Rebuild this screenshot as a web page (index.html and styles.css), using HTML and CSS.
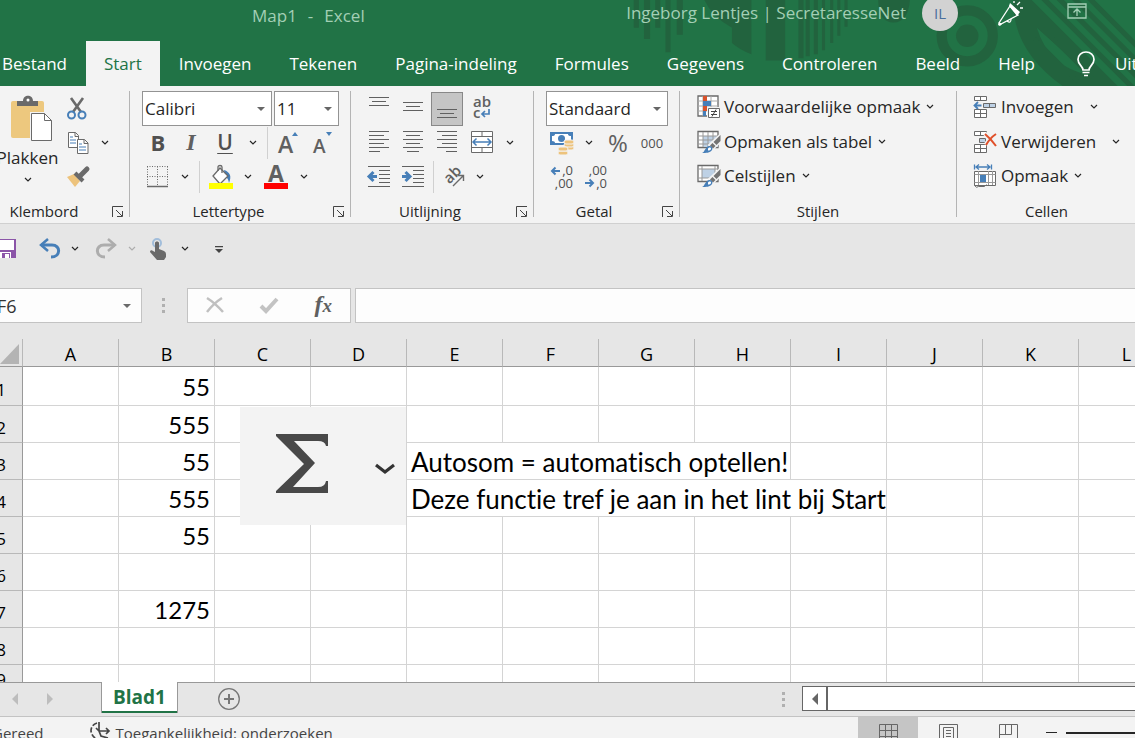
FILE: index.html
```html
<!DOCTYPE html>
<html lang="nl">
<head>
<meta charset="utf-8">
<title>Map1 - Excel</title>
<link rel="stylesheet" href="styles.css">
</head>
<body>
<svg class="defs" aria-hidden="true">
  <symbol id="chev" viewBox="0 0 8 6"><path d="M1 1l3 3 3-3" fill="none" stroke="currentColor" stroke-width="1.2"/></symbol>
  <symbol id="launch" viewBox="0 0 12 12"><path d="M.5 11V.5H11M4 4l6 6M10.500 5v5.500H5" fill="none" stroke="#444"/></symbol>
  <symbol id="brush" viewBox="0 0 24 24"><path d="M24 4v7l-8 8-4-4z" fill="#f3f3f3" stroke="#f3f3f3" stroke-width="2"/><path d="M23.500 5v6l-4 4-3-3z" fill="#737373"/><path d="M15.500 13l3 3-2.500 2.500-3-3z" fill="#737373"/><path d="M5 23c3-1 3-6 7-7 3 0 4 2 3 4-2 3-6 3-10 3z" fill="#477fb8"/><path d="M11 19c0-2 3-2 3-.5 0 2-2 2-3 2" fill="#fff"/></symbol>
</svg>

<header class="top">
  <svg class="art" viewBox="0 0 523 84" aria-hidden="true">
    <g fill="#22633e">
      <path d="M33 0h5v27h-5zM43 0h6v38h-6zM54 0h5v27h-5zM64 0h5v51h-5zM75 0h6v34h-6z"/>
      <path d="M102 0h46v53q-11-4-19-11V27Q110 17 102 0zM162 0h19v59h-19zM194 0h5v57h-5zM201 0h4v55h-4zM209 0h4v53h-4zM217 0h3v49h-3zM225 0h3v42h-3zM232 0h3v35h-3zM239 0h3v26h-3z"/>
      <path d="M272 0h31q-2 22-16 22-15 0-15-22z"/>
      <circle cx="359" cy="35" r="11"/>
      <path d="M404 0h18l86 86h-53Q403 50 404 0z"/>
    </g>
    <circle cx="359" cy="35" r="25" fill="none" stroke="#22633e" stroke-width="10"/>
    <g stroke="#22633e" stroke-width="5"><path d="M430-5l91 91M445-5l91 91M460-5l91 91M475-5l91 91"/></g>
    <path d="M427 27l51 46q-39-7-51-46z" fill="#217346"/>
    <g stroke="#22633e" stroke-width="4"><path d="M425 38l42 42M433 28l48 48"/></g>
  </svg>
  <div class="titlebar">
    <div class="doc"><span>Map1</span><span>-</span><span>Excel</span></div>
    <div class="account">
      <span>Ingeborg Lentjes | SecretaresseNet</span>
      <button class="avatar">IL</button>
      <button class="plain pen" aria-label="Nieuw"><svg width="26" height="26" viewBox="0 0 26 26"><path d="M12 5l8 9-17 9-2-1z" fill="none" stroke="#fff" stroke-width="1.300"/><path d="M12 2l10 9-3 4-8-10zM1 21l3 2-2 2-2-1z" fill="#fff"/><path d="M9 20q4 3 4-2M16 2V0M19 4l3-3M22 7h3" fill="none" stroke="#fff" stroke-width="1.300"/></svg></button>
      <button class="plain" aria-label="Lintopties"><svg width="20" height="16" viewBox="0 0 20 16" fill="none" stroke="#a3cfb5" stroke-width="1.300"><path d="M1 1h18v14H1zM1 4h18M10 13V6M6.500 9.500L10 6l3.500 3.500"/></svg></button>
    </div>
  </div>
  <nav class="tabs">
    <a href="#">Bestand</a><a href="#" class="on">Start</a><a href="#">Invoegen</a><a href="#">Tekenen</a><a href="#">Pagina-indeling</a><a href="#">Formules</a><a href="#">Gegevens</a><a href="#">Controleren</a><a href="#">Beeld</a><a href="#">Help</a>
    <a href="#" class="tell"><svg width="18" height="26" viewBox="0 0 18 26" fill="none" stroke="#fff" stroke-width="1.700"><path d="M6 19c0-4-5-5-5-10.500C1 4 4.500 1 9 1s8 3 8 7.500C17 14 12 15 12 19zM5.500 21.500h7M7 24.500h4"/></svg>Uit</a>
  </nav>
</header>

<main class="ribbon">
  <section class="group g-klem">
    <div class="clip">
      <button class="paste">
        <svg width="42" height="46" viewBox="0 0 42 46"><rect x="0" y="5" width="33" height="37" rx="2" fill="#edc87e"/><path d="M6 10V5h6c0-7 10-7 10 0h5v5z" fill="#6a6a6a"/><circle cx="17" cy="4" r="1.500" fill="#fff"/><path d="M19 16h15l8 8v22H19z" fill="#f3f3f3"/><path d="M20.500 17.500h13l7 7v20h-20z" fill="#fff" stroke="#6a6a6a"/><path d="M33.500 17.500v7h7" fill="none" stroke="#6a6a6a"/></svg>
        <span>Plakken</span>
        <svg class="chev"><use href="#chev"/></svg>
      </button>
      <div class="clipcol">
        <div class="row"><button class="w32" aria-label="Knippen"><svg width="20" height="22" viewBox="0 0 20 22"><path d="M4 0l10 14M16 0L6 14" stroke="#6a6a6a" stroke-width="2.600"/><circle cx="4.500" cy="17" r="3.500" fill="none" stroke="#477fb8" stroke-width="2"/><circle cx="15" cy="17" r="3.500" fill="none" stroke="#477fb8" stroke-width="2"/></svg></button></div>
        <div class="row"><button class="w34" aria-label="Kopiëren"><svg width="22" height="24" viewBox="0 0 22 24"><g fill="#fff" stroke="#6a6a6a"><path d="M1.500 1.500h7l3 3v12h-10zM8 1.500v4h3.500"/><path d="M10.500 8.500h7l3.500 3.500v10.500H10.500zM17 8.500V12.500h4"/></g><path d="M3 6h3M3 9h6M3 12h6M12 13h3M12 16h7M12 19h7" stroke="#477fb8"/></svg></button><button class="w20" aria-label="Kopieeropties"><svg class="chev"><use href="#chev"/></svg></button></div>
        <div class="row"><button class="w34" aria-label="Opmaak kopiëren"><svg width="24" height="22" viewBox="0 0 24 22"><path d="M1 11l7-3 6 7-5 6z" fill="#edc37c"/><path d="M9 7l8 8" stroke="#6a6a6a" stroke-width="4"/><path d="M14 10l7-7" stroke="#6a6a6a" stroke-width="5" stroke-linecap="round"/></svg></button></div>
      </div>
    </div>
    <footer><span>Klembord</span><button class="launch" aria-label="Klembord openen"><svg><use href="#launch"/></svg></button></footer>
  </section>

  <section class="group g-font">
    <div class="row two"><select class="fontname" aria-label="Lettertype"><option>Calibri</option></select><select class="fontsize" aria-label="Tekengrootte"><option>11</option></select></div>
    <div class="row">
      <button class="w32 bold">B</button><button class="w34 ital">I</button><button class="w34 under">U</button><button class="w22" aria-label="Onderstrepingen"><svg class="chev"><use href="#chev"/></svg></button><i class="sep"></i>
      <button class="w32" aria-label="Groter"><svg width="22" height="24" viewBox="0 0 22 24"><text x="1" y="22" class="bigA">A</text><path d="M15 5l3-4 3 4z" fill="#477fb8"/></svg></button>
      <button class="w36" aria-label="Kleiner"><svg width="22" height="24" viewBox="0 0 22 24"><text x="2" y="22" class="smallA">A</text><path d="M15 1h6l-3 4z" fill="#477fb8"/></svg></button>
    </div>
    <div class="row">
      <button class="w32" aria-label="Randen"><svg width="22" height="22" viewBox="0 0 22 22" stroke="#6a6a6a"><path d="M.5.500v20M10.500.500v20M20.500.500v20M0 .5h21M0 10.500h21" stroke-dasharray="1 1.500"/><path d="M0 20.500h21" stroke-width="1.500"/></svg></button><button class="w22" aria-label="Randopties"><svg class="chev"><use href="#chev"/></svg></button><i class="sep"></i>
      <button class="w34" aria-label="Opvulkleur"><svg width="24" height="24" viewBox="0 0 24 24"><path d="M15 5c6 2 8 6 5 13-1-5-2-5-4-7z" fill="#477fb8"/><path d="M11 3l8 8-8 8-7-8z" fill="#fff" stroke="#6a6a6a" stroke-width="1.300"/><path d="M9 6V2c0-2 4-2 4 0v6" fill="none" stroke="#6a6a6a" stroke-width="1.300"/><path d="M0 18h24v6H0z" fill="#ff0"/></svg></button><button class="w20" aria-label="Opvulopties"><svg class="chev"><use href="#chev"/></svg></button>
      <button class="w36" aria-label="Tekstkleur"><svg width="24" height="24" viewBox="0 0 24 24"><text x="4" y="17" class="colA">A</text><path d="M0 18h24v6H0z" fill="red"/></svg></button><button class="w20" aria-label="Tekstkleuropties"><svg class="chev"><use href="#chev"/></svg></button>
    </div>
    <footer><span>Lettertype</span><button class="launch" aria-label="Lettertype openen"><svg><use href="#launch"/></svg></button></footer>
  </section>

  <section class="group g-align">
    <div class="row">
      <button class="w34" aria-label="Boven"><svg class="al" viewBox="0 0 22 24"><path d="M1 .5h20M4 4.500h14M1 8.500h20"/></svg></button><button class="w34" aria-label="Midden"><svg class="al" viewBox="0 0 22 24"><path d="M1 5.500h20M4 9.500h14M1 13.500h20"/></svg></button><button class="w34 pressed" aria-label="Onder"><svg class="al" viewBox="0 0 22 24"><path d="M1 12.500h20M4 16.500h14M1 20.500h20"/></svg></button>
      <button class="w36" aria-label="Terugloop"><svg width="22" height="24" viewBox="0 0 22 24"><text x="2" y="10" class="ab">ab</text><text x="2" y="21" class="ab">c</text><path d="M18 12v5h-6M14 14l-3 3 3 3" fill="none" stroke="#477fb8" stroke-width="1.700"/></svg></button>
    </div>
    <div class="row">
      <button class="w34" aria-label="Links"><svg class="al" viewBox="0 0 22 24"><path d="M1 .5h20M1 4.500h15M1 8.500h20M1 12.500h15M1 16.500h20M1 20.500h11"/></svg></button><button class="w34" aria-label="Centreren"><svg class="al" viewBox="0 0 22 24"><path d="M1 .5h20M4 4.500h14M1 8.500h20M4 12.500h14M1 16.500h20M5 20.500h12"/></svg></button><button class="w34" aria-label="Rechts"><svg class="al" viewBox="0 0 22 24"><path d="M1 .5h20M6 4.500h15M1 8.500h20M6 12.500h15M1 16.500h20M10 20.500h11"/></svg></button>
      <button class="w36" aria-label="Samenvoegen"><svg width="24" height="24" viewBox="0 0 24 24" fill="none" stroke="#6a6a6a"><path d="M1.500.500h21v21h-21z" fill="#fff"/><path d="M1.500 5.500h21M1.500 16.500h21M12 0v5M12 17v5"/><path d="M3 11h18M6.500 7.500L3 11l3.500 3.500M17.500 7.500L21 11l-3.500 3.500" stroke="#477fb8" stroke-width="1.500"/></svg></button><button class="w20" aria-label="Samenvoegopties"><svg class="chev"><use href="#chev"/></svg></button>
    </div>
    <div class="row">
      <button class="w34" aria-label="Minder inspringen"><svg class="al" viewBox="0 0 22 24"><path d="M0 1.500h22M11 5.500h11M11 9.500h11M11 13.500h11M11 17.500h11M0 21.500h22"/><path d="M1 11.500h8M5.500 7L1 11.500 5.500 16" class="bl"/></svg></button><button class="w34" aria-label="Meer inspringen"><svg class="al" viewBox="0 0 22 24"><path d="M0 1.500h22M11 5.500h11M11 9.500h11M11 13.500h11M11 17.500h11M0 21.500h22"/><path d="M0 11.500h8M3.500 7L8 11.500 3.500 16" class="bl"/></svg></button><i class="sep"></i>
      <button class="w32" aria-label="Afdrukstand"><svg width="22" height="22" viewBox="0 0 22 22"><text x="1" y="15" transform="rotate(-45 8 10)" class="ab">ab</text><path d="M10 20L20 10M15 9.500h5.500V15" fill="none" stroke="#6a6a6a" stroke-width="1.400"/></svg></button><button class="w20" aria-label="Standopties"><svg class="chev"><use href="#chev"/></svg></button>
    </div>
    <footer><span>Uitlijning</span><button class="launch" aria-label="Uitlijning openen"><svg><use href="#launch"/></svg></button></footer>
  </section>

  <section class="group g-num">
    <div class="row"><select class="numfmt" aria-label="Getalnotatie"><option>Standaard</option></select></div>
    <div class="row">
      <button class="w32" aria-label="Valuta"><svg width="24" height="24" viewBox="0 0 24 24"><path d="M0 1h23v13H0z" fill="#477fb8"/><path d="M2 5q3 0 3-2h13q0 2 3 2v5q-3 0-3 2H5q0-2-3-2z" fill="#fff"/><circle cx="11.500" cy="7.500" r="3.500" fill="#477fb8"/><g fill="#edc37c" stroke="#f3f3f3"><rect x="14" y="15" width="10" height="4" rx="2"/><rect x="14" y="12" width="10" height="4" rx="2"/><rect x="14" y="9" width="10" height="4" rx="2"/><rect x="8" y="20" width="10" height="4" rx="2"/><rect x="8" y="16" width="10" height="4" rx="2"/></g></svg></button><button class="w22" aria-label="Valutaopties"><svg class="chev"><use href="#chev"/></svg></button><button class="w36 pct">%</button><button class="w32 zeros">000</button>
    </div>
    <div class="row">
      <button class="w32" aria-label="Meer decimalen"><svg width="24" height="24" viewBox="0 0 24 24"><text x="23" y="10" text-anchor="end" class="dec">,0</text><text x="23" y="23" text-anchor="end" class="dec">,00</text><path d="M2 6h8M5.500 2.500L2 6l3.500 3.500" fill="none" stroke="#477fb8" stroke-width="2"/></svg></button>
      <button class="w36" aria-label="Minder decimalen"><svg width="24" height="24" viewBox="0 0 24 24"><text x="23" y="10" text-anchor="end" class="dec">,00</text><text x="23" y="23" text-anchor="end" class="dec">,0</text><path d="M1 18h8M5.500 14.500L9 18l-3.500 3.500" fill="none" stroke="#477fb8" stroke-width="2"/></svg></button>
    </div>
    <footer><span>Getal</span><button class="launch" aria-label="Getal openen"><svg><use href="#launch"/></svg></button></footer>
  </section>

  <section class="group g-style">
    <div class="row"><button class="cmd"><svg width="24" height="24" viewBox="0 0 24 24"><path d="M1 1h20v20H1z" fill="#fff" stroke="#6a6a6a" stroke-width="1.300"/><path d="M1 6h20M1 11h20M1 16h20M6 1v20M14 1v20" stroke="#aaa"/><path d="M6 1h4v5H6zM6 11h4v5H6z" fill="#d9532c"/><path d="M6 6h8v5H6zM6 16h3v5H6z" fill="#477fb8"/><path d="M10 12h14v12H10z" fill="#f3f3f3"/><path d="M11.500 13.500h11v9h-11z" fill="#fff" stroke="#6a6a6a"/><path d="M14 16.500h6M14 19.500h6M19 14.500l-4 7" stroke="#444"/></svg><span>Voorwaardelijke opmaak</span><svg class="chev"><use href="#chev"/></svg></button></div>
    <div class="row"><button class="cmd"><svg width="24" height="24" viewBox="0 0 24 24"><path d="M1 1.500h20v16H1z" fill="#fff" stroke="#6a6a6a" stroke-width="1.300"/><path d="M6 6h15v11H6z" fill="#bed1e5"/><path d="M1 6h20M1 10h20M1 14h20M6 2v15M11 2v15M16 2v15" stroke="#999"/><use href="#brush"/></svg><span>Opmaken als tabel</span><svg class="chev"><use href="#chev"/></svg></button></div>
    <div class="row"><button class="cmd"><svg width="24" height="24" viewBox="0 0 24 24"><path d="M1 1.500h20v16H1z" fill="#fff" stroke="#6a6a6a" stroke-width="1.300"/><path d="M5 5h13v9H5z" fill="#bed1e5"/><path d="M1 5h20M1 14h20M5 2v15M18 2v15" stroke="#999"/><use href="#brush"/></svg><span>Celstijlen</span><svg class="chev"><use href="#chev"/></svg></button></div>
    <footer><span>Stijlen</span></footer>
  </section>

  <section class="group g-cell">
    <div class="row"><button class="cmd wide"><svg width="24" height="24" viewBox="0 0 24 24" fill="#fff" stroke="#6a6a6a"><path d="M1.500 1.500h12v4h-12zM7.500 1.500v4M1.500 14.500h12v8h-12zM7.500 14.500v8M1.500 18.500h12"/><path d="M10.500 8.500h12v4h-12zM16.500 8.500v4" fill="#bed1e5"/><path d="M1.500 10.500h7M5 7l-3.500 3.500L5 14" fill="none" stroke="#477fb8" stroke-width="1.800"/></svg><span>Invoegen</span><svg class="chev"><use href="#chev"/></svg></button></div>
    <div class="row"><button class="cmd wide"><svg width="24" height="24" viewBox="0 0 24 24" fill="#fff" stroke="#6a6a6a"><path d="M1.500 1.500h12v4h-12zM7.500 1.500v4M1.500 14.500h12v8h-12zM7.500 14.500v8M1.500 18.500h12"/><path d="M6.500 8.500h6v4h-6z" fill="#bed1e5"/><path d="M12 4q6 5 11 12M23 4q-6 4-10 11" fill="none" stroke="#f3f3f3" stroke-width="5"/><path d="M12 4q6 5 11 12M23 4q-6 4-10 11" fill="none" stroke="#e0502a" stroke-width="2"/></svg><span>Verwijderen</span><svg class="chev"><use href="#chev"/></svg></button></div>
    <div class="row"><button class="cmd"><svg width="24" height="24" viewBox="0 0 24 24" fill="#fff" stroke="#6a6a6a"><path d="M1.500 7.500h21v14h-21z"/><path d="M1.500 10.500h21M1.500 18.500h21M5.500 7v14M15.500 7v14M19.500 7v14" stroke="#999"/><path d="M7 11h6v7H7z" fill="#477fb8" stroke="none"/><path d="M1.500 21.500q2 3 4 1h6l2-2" fill="none"/><path d="M1.500.500v5M18.500.500v5M3 3h14M6 .5L3 3l3 2.500M14 .5L17 3l-3 2.500" fill="none" stroke="#477fb8" stroke-width="1.300"/></svg><span>Opmaak</span><svg class="chev"><use href="#chev"/></svg></button></div>
    <footer><span>Cellen</span></footer>
  </section>
</main>

<div class="qat">
  <button aria-label="Opslaan"><svg width="22" height="20" viewBox="0 0 22 20"><path d="M0 0h22v19H0z" fill="#8b55a8"/><path d="M2 1h18v10H2zM6 13h11v6H6z" fill="#fff"/><path d="M8 14h8v5H8z" fill="#8b55a8"/><path d="M11 15h4v4h-4z" fill="#fff"/></svg></button>
  <button class="undo" aria-label="Ongedaan maken"><svg width="22" height="20" viewBox="0 0 22 20"><path d="M2 6h11c9 0 9 12-1 12" fill="none" stroke="#477fb8" stroke-width="3"/><path d="M9 0L2 6l7 6" fill="none" stroke="#477fb8" stroke-width="2.500"/></svg></button>
  <button aria-label="Lijst"><svg class="chev"><use href="#chev"/></svg></button>
  <button class="redo" aria-label="Opnieuw"><svg width="22" height="20" viewBox="0 0 22 20"><path d="M20 6H9C0 6 0 18 10 18" fill="none" stroke="#adadad" stroke-width="3"/><path d="M13 0l7 6-7 6" fill="none" stroke="#adadad" stroke-width="2.500"/></svg></button>
  <button class="dim" aria-label="Lijst"><svg class="chev"><use href="#chev"/></svg></button>
  <button class="touch" aria-label="Aanraakmodus"><svg width="18" height="22" viewBox="0 0 18 22"><circle cx="8" cy="5" r="4" fill="none" stroke="#a2bedb" stroke-width="2"/><path d="M6 5c0-2 4-2 4 0v6l5 2q2 1 2 3v3l-2 3H8l-7-8c0-2 2-2 3-1l2 1z" fill="#6a6a6a"/></svg></button>
  <button class="touchmore" aria-label="Lijst"><svg class="chev"><use href="#chev"/></svg></button>
  <button class="custom" aria-label="Aanpassen"><svg width="8" height="7" viewBox="0 0 8 7" fill="#444"><path d="M0 0h8v1.300H0zM0 3h8L4 7z"/></svg></button>
</div>

<div class="fbar">
  <div class="name"><input aria-label="Naamvak" value="F6"><svg width="8" height="4" viewBox="0 0 8 4"><path d="M0 0h8L4 4z" fill="#6a6a6a"/></svg></div>
  <i class="dots"></i>
  <div class="fbtns">
    <button aria-label="Annuleren"><svg width="18" height="17" viewBox="0 0 18 17"><path d="M1 1q8 5 16 14M16 1Q8 6 1 15" fill="none" stroke="#c0c0c0" stroke-width="2.500"/></svg></button>
    <button aria-label="Invoeren"><svg width="20" height="17" viewBox="0 0 20 17"><path d="M2 9l5 5L18 2" fill="none" stroke="#c3c3c3" stroke-width="4"/></svg></button>
    <button class="fx">f<small>x</small></button>
  </div>
  <input class="formula" aria-label="Formulebalk">
</div>

<div class="sheet">
  <table>
    <colgroup><col class="rh"><col span="12"></colgroup>
    <thead><tr><th class="corner"><svg width="19" height="20" viewBox="0 0 19 20"><path d="M19 0v20H0z" fill="#b4b4b4"/></svg></th><th>A</th><th>B</th><th>C</th><th>D</th><th>E</th><th>F</th><th>G</th><th>H</th><th>I</th><th>J</th><th>K</th><th>L</th></tr></thead>
    <tbody>
      <tr><th>1</th><td></td><td>55</td><td></td><td></td><td></td><td></td><td></td><td></td><td></td><td></td><td></td><td></td></tr>
      <tr><th>2</th><td></td><td>555</td><td></td><td></td><td></td><td></td><td></td><td></td><td></td><td></td><td></td><td></td></tr>
      <tr><th>3</th><td></td><td>55</td><td></td><td></td><td colspan="4" class="txt">Autosom = automatisch optellen!</td><td></td><td></td><td></td><td></td></tr>
      <tr><th>4</th><td></td><td>555</td><td></td><td></td><td colspan="5" class="txt">Deze functie tref je aan in het lint bij Start</td><td></td><td></td><td></td></tr>
      <tr><th>5</th><td></td><td>55</td><td></td><td></td><td></td><td></td><td></td><td></td><td></td><td></td><td></td><td></td></tr>
      <tr><th>6</th><td></td><td></td><td></td><td></td><td></td><td></td><td></td><td></td><td></td><td></td><td></td><td></td></tr>
      <tr><th>7</th><td></td><td>1275</td><td></td><td></td><td></td><td></td><td></td><td></td><td></td><td></td><td></td><td></td></tr>
      <tr><th>8</th><td></td><td></td><td></td><td></td><td></td><td></td><td></td><td></td><td></td><td></td><td></td><td></td></tr>
      <tr class="short"><th>9</th><td></td><td></td><td></td><td></td><td></td><td></td><td></td><td></td><td></td><td></td><td></td><td></td></tr>
    </tbody>
  </table>
  <svg class="sum" viewBox="0 0 166 118" role="img" aria-label="Autosom"><path d="M36 27h52v12h-2q-1-5-8-5H54l21 22-22 24h25q7 0 8-6h2v12H36v-2l28-27-28-28z" fill="#484848"/><path d="M136 58l9 7 9-7" fill="none" stroke="#333" stroke-width="3.200"/></svg>
</div>

<div class="sheettabs">
  <button aria-label="Vorige"><svg width="6" height="12" viewBox="0 0 6 12"><path d="M6 0v12L0 6z" fill="#bdbdbd"/></svg></button>
  <button aria-label="Volgende"><svg width="6" height="12" viewBox="0 0 6 12"><path d="M0 0v12l6-6z" fill="#bdbdbd"/></svg></button>
  <a href="#" class="blad">Blad1</a>
  <button class="add" aria-label="Nieuw blad"><svg width="22" height="22" viewBox="0 0 22 22" fill="none" stroke="#777"><circle cx="11" cy="11" r="10.300" stroke-width="1.300"/><path d="M6 11h10M11 6v10" stroke-width="2"/></svg></button>
  <i class="dots"></i>
  <div class="scroll"><button aria-label="Naar links"><svg width="6" height="12" viewBox="0 0 6 12"><path d="M6 0v12L0 6z" fill="#666"/></svg></button></div>
</div>

<footer class="status">
  <span class="ready">Gereed</span>
  <span class="acc"><svg width="20" height="20" viewBox="0 0 20 20" fill="none" stroke="#444" stroke-width="1.700"><path d="M7 2Q1 4 1 10q1 6 6 8" stroke-dasharray="5 2"/><path d="M9 1v9M6 7l3 3h10M16 7l3 3-3 3M9 10l2 5 7 2"/></svg>Toegankelijkheid: onderzoeken</span>
  <button class="view on" aria-label="Normaal"><svg width="20" height="20" viewBox="0 0 20 20" fill="none" stroke="#666"><path d="M1.500 1.500h18v18h-18zM7.500 1.500v18M13.500 1.500v18M1.500 7.500h18M1.500 13.500h18"/></svg></button>
  <button class="view" aria-label="Pagina-indeling"><svg width="20" height="20" viewBox="0 0 20 20" fill="none" stroke="#666"><path d="M1.500 1.500h18v18h-18zM5.500 4.500h10v15M5.500 4.500v15M8 7.500h5M8 10.500h5M8 13.500h5"/></svg></button>
  <button class="view" aria-label="Pagina-eindevoorbeeld"><svg width="20" height="20" viewBox="0 0 20 20" fill="none" stroke="#666"><path d="M1.500 19V1.500h18V19M1.500 11.500h12v-10M7.500 1.500v10"/></svg></button>
  <i class="minus"></i><i class="track"></i>
</footer>
</body>
</html>
```

FILE: styles.css
```css
* { box-sizing: border-box; }
body {
  margin: 0;
  height: 100vh;
  overflow: hidden;
  display: flex;
  flex-direction: column;
  background: #e6e6e6;
  color: #262626;
  font: 17px/24px "Open Sans", "Noto Sans", sans-serif;
}
button { border: 0; padding: 0; background: none; font: inherit; color: inherit; }
button, .row { display: flex; align-items: center; }
button { justify-content: center; }
svg { display: block; flex: none; overflow: visible; }
.defs { position: absolute; width: 0; height: 0; }
.chev { width: 8px; height: 6px; }

.top { position: relative; background: #217346; color: #fff; flex: none; overflow: hidden; }
.art { position: absolute; top: 0; right: 0; width: 535px; height: 86px; }
.titlebar { position: relative; height: 41px; display: flex; justify-content: space-between; padding: 0 48px 0 252px; color: #a3cfb5; }
.doc { display: flex; gap: 11px; padding-top: 4px; }
.account { display: flex; align-items: flex-start; padding-top: 1px; }
.avatar { width: 36px; height: 36px; margin: -6px 40px 0 16px; border-radius: 50%; background: #d2d2d2; color: #4a6f9c; font-size: 15px; }
.plain { padding-top: 2px; }
.pen { margin-right: 43px; padding: 0; }
.tabs { position: relative; height: 45px; display: flex; white-space: nowrap; padding-left: 2px; }
.tabs a { color: #fff; text-decoration: none; line-height: 45px; margin-right: 38px; }
.tabs .on { background: #f3f3f3; color: #217346; padding: 0 18px; margin: 0 19px 0 -19px; }
.tabs .tell { display: flex; align-items: center; gap: 20px; margin: 0 0 0 4px; }

.ribbon { flex: none; display: flex; background: #f3f3f3; border-bottom: 1px solid #d0d0d0; padding: 5px 0 6px; white-space: nowrap; }
.group { flex: none; border-right: 1px solid #b4b4b4; }
.group .row { height: 34px; }
.group > .row:first-child, .clipcol .row:first-child { height: 35px; }
.group footer { display: flex; align-items: flex-start; height: 23px; font-size: 15px; line-height: 34px; padding-right: 5px; }
.group footer span { flex: 1; text-align: center; }
.launch svg { width: 12px; height: 12px; margin-top: 12px; }
.g-klem { width: 130px; }
.g-font { width: 221px; padding-left: 12px; }
.g-align { width: 183px; padding-left: 11px; }
.g-num { width: 146px; padding-left: 12px; }
.g-style { width: 277px; padding-left: 17px; }
.g-cell { width: 196px; padding-left: 16px; border: 0; }
.g-klem footer { margin-left: -24px; }
.g-font footer, .g-align footer { margin-left: -18px; }
.g-num footer { margin-left: -20px; }
.g-style footer { margin-left: -17px; padding: 0; }
.g-cell footer { margin-left: -33px; padding: 0; }
.clip { display: flex; }
.paste { width: 61px; flex-direction: column; justify-content: flex-start; padding-top: 5px; }
.paste > svg:first-child { margin-left: 3px; }
.paste span { margin: 4px 0 7px -6px; line-height: 24px; }
.paste .chev { margin-right: 6px; }
.w20 { width: 20px; } .w22 { width: 22px; } .w32 { width: 32px; } .w34 { width: 34px; } .w36 { width: 36px; }
.sep { width: 1px; height: 32px; background: #d0d0d0; margin: 0 4px 0 3px; }
.two { gap: 2px; }
select {
  height: 35px; border: 1px solid #939393; border-radius: 0; color: #262626; padding: 0 2px; font: inherit; appearance: none;
  background: #fff url("data:image/svg+xml,%3Csvg xmlns='http://www.w3.org/2000/svg' width='8' height='4'%3E%3Cpath d='M0 0h8L4 4z' fill='%23666'/%3E%3C/svg%3E") right 6px center no-repeat;
}
.fontname { width: 130px; }
.fontsize { width: 65px; }
.numfmt { width: 122px; }
.bold, .ital, .under { padding-bottom: 3px; }
.bold { font-size: 22px; font-weight: 700; color: #505050; }
.ital { font: italic 700 24px/24px "Liberation Serif", serif; color: #606060; }
.under { font-size: 21px; font-weight: 600; color: #505050; text-decoration: underline; text-decoration-thickness: 1px; text-underline-offset: 3px; }
text { font-family: "Open Sans", sans-serif; fill: #606060; }
.bigA { font-size: 23px; font-weight: 600; }
.smallA { font-size: 19px; font-weight: 600; }
.colA { font-size: 23px; font-weight: 700; }
.ab { font-size: 15px; font-weight: 600; }
.dec { font-size: 13px; fill: #505050; }
.pct { font-size: 24px; color: #606060; }
.zeros { font-size: 13px; color: #505050; }
.al { width: 22px; height: 24px; fill: none; stroke: #606060; stroke-width: 1; }
.al .bl { stroke: #477fb8; stroke-width: 3; }
.pressed { width: 32px; height: 34px; margin: 0 1px; background: #c5c5c5; border: 1px solid #888; }
.cmd { padding-bottom: 3px; }
.cmd span { margin: 0 6px 0 3px; }
.cmd.wide span { margin-right: 16px; }
.g-cell .cmd span { margin-left: 4px; }

.qat { flex: none; height: 50px; display: flex; align-items: center; margin-left: -6px; }
.undo { margin: 0 10px 0 23px; }
.redo { margin: 0 11px 0 16px; }
.dim { color: #adadad; }
.touch { margin: 0 14px 0 13px; }
.custom { margin-left: 26px; }

.fbar { flex: none; height: 35px; margin: 14px 0 16px -10px; display: flex; }
.name { width: 152px; display: flex; align-items: center; background: #fdfdfd; border: 1px solid #c3c3c3; padding: 0 10px 0 6px; }
input { min-width: 0; flex: 1; border: 0; background: none; font: inherit; font-size: 18px; color: #333; padding: 0; }
.dots { width: 3px; height: 15px; background: repeating-linear-gradient(#b0b0b0 0 3px, transparent 3px 6px); align-self: center; }
.fbar .dots { margin: 0 22px 0 20px; }
.fbtns { width: 164px; display: flex; justify-content: space-between; padding: 0 18px; background: #fdfdfd; border: 1px solid #c3c3c3; }
.fx { font: italic 700 24px/24px "Liberation Serif", serif; color: #606060; padding-bottom: 3px; }
.fx small { font-size: 19px; padding-top: 4px; }
.formula { background: #fdfdfd; border: 1px solid #c3c3c3; border-right: 0; margin-left: 4px; }

.sheet { position: relative; flex: 1; min-height: 0; overflow: hidden; }
table { table-layout: fixed; width: 1195px; margin-left: -20px; border-collapse: separate; border-spacing: 0; color: #000; }
col { width: 96px; }
.rh { width: 43px; }
th { font-weight: 400; padding: 0; background: #e6e6e6; border-right: 1px solid #b8b8b8; border-bottom: 1px solid #999; }
thead th { height: 28px; padding-top: 3px; font-size: 18px; }
.corner svg { margin: 0 3px 0 auto; }
tbody th { border-right-color: #999; border-bottom-color: #b8b8b8; padding-top: 7px; }
td { height: 37px; padding: 2px 4px 0 0; background: #fff; border: solid #d4d4d4; border-width: 0 1px 1px 0; text-align: right; white-space: nowrap; font: 24px/32px Lato, sans-serif; font-variant-ligatures: none; }
tbody tr:first-child td { height: 39px; }
tbody .short td { height: 26px; }
tbody .short th { padding-top: 3px; }
td.txt { text-align: left; padding: 2px 0 0 4px; font-size: 26px; }
.sum { position: absolute; left: 240px; top: 68px; width: 166px; height: 118px; background: #f3f3f3; }

.sheettabs { flex: none; height: 34px; display: flex; align-items: center; border-top: 1px solid #999; padding-left: 12px; }
.sheettabs > button { padding-bottom: 2px; }
.sheettabs > button + button { margin-left: 29px; }
.blad { align-self: flex-start; margin: -1px 0 0 48px; padding: 0 11px; height: 31px; line-height: 31px; background: #fff; border: solid #999; border-width: 0 1px; box-shadow: inset 0 -2px #217346; color: #217346; font-size: 19px; font-weight: 700; text-decoration: none; }
.sheettabs .add { margin-left: 40px; }
.sheettabs .dots { margin-left: auto; }
.scroll { width: 333px; height: 25px; margin: 0 0 2px 17px; background: #fff; border: 1px solid #666; border-right: 0; display: flex; }
.scroll button { width: 25px; border-right: 2px solid #666; }

.status { flex: none; height: 22px; overflow: hidden; display: flex; align-items: flex-start; background: #f3f3f3; border-top: 1px solid #c3c3c3; font-size: 15px; color: #444; }
.ready { margin: 4px 47px 0 -8px; }
.acc { display: flex; gap: 5px; padding-top: 4px; margin-right: auto; }
.view { width: 60px; height: 32px; }
.view.on { background: #c5c5c5; }
.minus { width: 11px; height: 1px; background: #262626; margin: 15px 9px 0 8px; }
.track { width: 69px; height: 2px; background: #262626; margin-top: 15px; }
```
